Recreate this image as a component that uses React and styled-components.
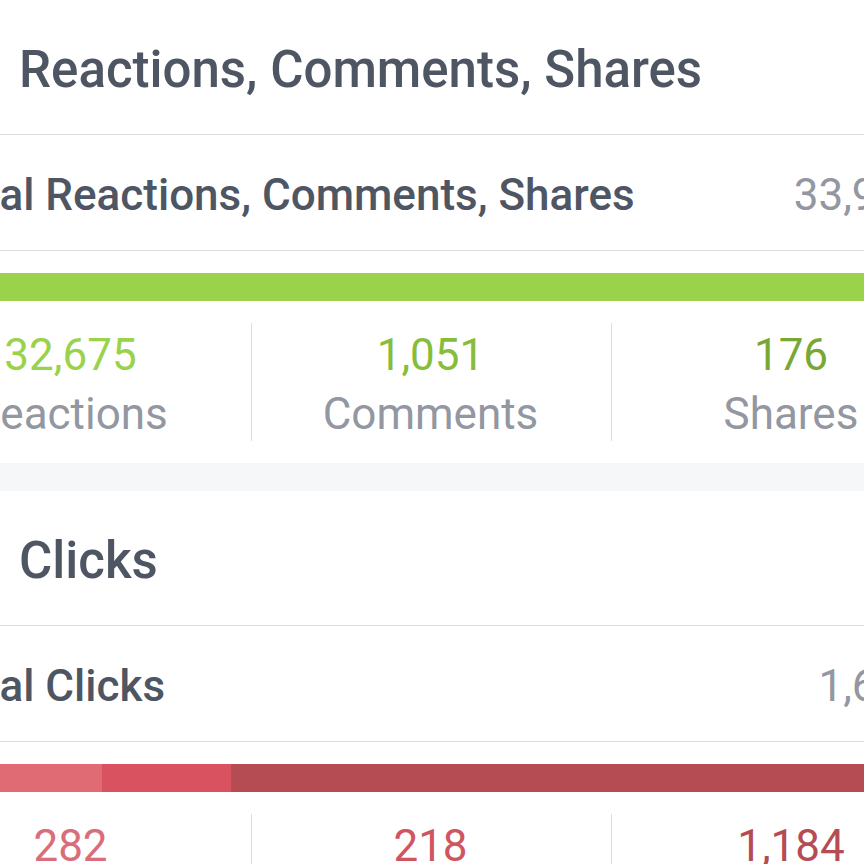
import React from "react";
import styled, { createGlobalStyle } from "styled-components";

const Global = createGlobalStyle`
  * { box-sizing: border-box; }
  html, body, #root { height: 100%; }
  body {
    margin: 0;
    overflow: hidden;
    background: #f6f7f9;
    color: #4e5563;
    font-family: Roboto, "Liberation Sans", sans-serif;
  }
`;

const Viewport = styled.main`
  height: 100%;
  overflow: hidden;
`;

const Feed = styled.div`
  width: calc(100% + 216px);
  margin-left: -108px;
  display: grid;
  gap: 28px;
`;

const Card = styled.section`
  background: #fff;
`;

const CardHeader = styled.header`
  display: flex;
  align-items: center;
  height: 135px;
  padding: 6px 127px 0;
  border-bottom: 1px solid #dcdfe0;
`;

const Title = styled.h2`
  margin: 0;
  font-size: 51px;
  font-weight: 500;
  line-height: 60px;
  white-space: nowrap;
`;

const TotalRow = styled.div`
  display: flex;
  align-items: center;
  justify-content: space-between;
  height: 116px;
  padding: 4px 46px 0 44px;
  border-bottom: 1px solid #dcdfe0;
  font-size: 44px;
  line-height: 52px;
  white-space: nowrap;
`;

const TotalLabel = styled.h3`
  margin: 0;
  font-size: inherit;
  font-weight: 500;
`;

const TotalValue = styled.span`
  color: #9297a1;
`;

const Bar = styled.div`
  display: flex;
  height: 28px;
  margin: 22px 44px 0;
`;

const Segment = styled.div`
  flex: ${(p) => p.$share} 0 0;
  background: ${(p) => p.$color};
`;

const Stats = styled.div`
  display: grid;
  grid-template-columns: repeat(3, 1fr);
  padding: 22px 0;
`;

const Stat = styled.div`
  height: 118px;
  padding: 3px 2px 0 0;
  border-right: 1px solid #dcdfe0;
  font-size: 44px;
  line-height: 59px;
  text-align: center;
  &:last-child { border-right: 0; }
`;

const Value = styled.div`
  color: ${(p) => p.$color};
`;

const Label = styled.div`
  color: #9297a1;
`;

const cards = [
  {
    title: "Reactions, Comments, Shares",
    total: "33,902",
    stats: [
      { label: "Reactions", value: 32675, bar: "#9ad24b", text: "#9ad24b" },
      { label: "Comments", value: 1051, bar: "#86bd3b", text: "#86bd3b" },
      { label: "Shares", value: 176, bar: "#79a735", text: "#79a735" },
    ],
  },
  {
    title: "Clicks",
    total: "1,684",
    stats: [
      { label: "Photo Views", value: 282, bar: "#e16b74", text: "#d96d79" },
      { label: "Link Clicks", value: 218, bar: "#d8535f", text: "#cf5561" },
      { label: "Other Clicks", value: 1184, bar: "#b54c54", text: "#b54c54" },
    ],
  },
];

function EngagementCard({ title, total, stats }) {
  return (
    <Card>
      <CardHeader>
        <Title>{title}</Title>
      </CardHeader>
      <TotalRow>
        <TotalLabel>Total {title}</TotalLabel>
        <TotalValue>{total}</TotalValue>
      </TotalRow>
      <Bar>
        {stats.map((s) => (
          <Segment key={s.label} $share={s.value} $color={s.bar} />
        ))}
      </Bar>
      <Stats>
        {stats.map((s) => (
          <Stat key={s.label}>
            <Value $color={s.text}>{s.value.toLocaleString("en-US")}</Value>
            <Label>{s.label}</Label>
          </Stat>
        ))}
      </Stats>
    </Card>
  );
}

export default function App() {
  return (
    <>
      <Global />
      <Viewport>
        <Feed>
          {cards.map((c) => (
            <EngagementCard key={c.title} {...c} />
          ))}
        </Feed>
      </Viewport>
    </>
  );
}
